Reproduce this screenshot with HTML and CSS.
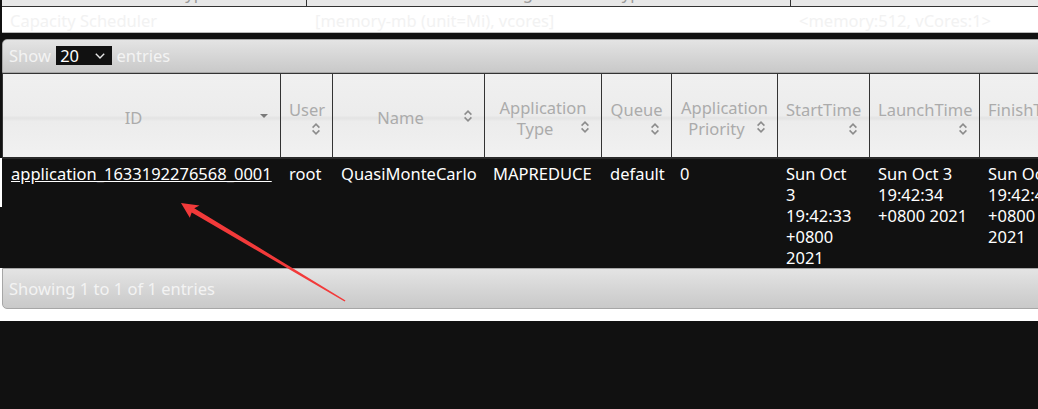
FILE: index.html
```html
<!DOCTYPE html>
<html lang="en">
<head>
<meta charset="utf-8">
<title>Applications</title>
<link rel="stylesheet" href="styles.css">
</head>
<body>
<div class="page">
  <table class="sched">
    <colgroup>
      <col class="s1"><col class="s2"><col class="s3"><col class="s4">
    </colgroup>
    <thead>
      <tr><th>Scheduler Type</th><th>Scheduling Resource Type</th><th>Minimum Allocation</th><th>Maximum Allocation</th></tr>
    </thead>
    <tbody>
      <tr><td>Capacity Scheduler</td><td>[memory-mb (unit=Mi), vcores]</td><td>&lt;memory:512, vCores:1&gt;</td><td>&lt;memory:8192, vCores:4&gt;</td></tr>
    </tbody>
  </table>

  <div class="apps">
    <div class="toolbar toolbar-top">Show <span class="select"><span class="select-val">20</span><svg class="chev" width="10" height="6" viewBox="0 0 10 6"><path d="M0.8 0.8 L5 5 L9.2 0.8" fill="none" stroke="#e6e6e6" stroke-width="1.4"/></svg></span> entries</div>

    <table class="grid">
      <colgroup>
        <col class="g-id"><col class="g-user"><col class="g-name"><col class="g-type"><col class="g-queue"><col class="g-prio"><col class="g-start"><col class="g-launch"><col class="g-finish"><col class="g-state"><col class="g-final">
      </colgroup>
      <thead>
        <tr>
          <th>ID<span class="sort"><svg width="16" height="16" viewBox="0 0 16 16"><path d="M4 6 L12 6 L8 10 Z" fill="#7a7a7a"/></svg></span></th>
          <th>User<span class="sort"><svg width="16" height="16" viewBox="0 0 16 16"><path d="M4.6 6.6 L8 3.2 L11.4 6.6 M4.6 9.4 L8 12.8 L11.4 9.4" fill="none" stroke="#8c8c8c" stroke-width="1.6"/></svg></span></th>
          <th>Name<span class="sort"><svg width="16" height="16" viewBox="0 0 16 16"><path d="M4.6 6.6 L8 3.2 L11.4 6.6 M4.6 9.4 L8 12.8 L11.4 9.4" fill="none" stroke="#8c8c8c" stroke-width="1.6"/></svg></span></th>
          <th>Application Type<span class="sort"><svg width="16" height="16" viewBox="0 0 16 16"><path d="M4.6 6.6 L8 3.2 L11.4 6.6 M4.6 9.4 L8 12.8 L11.4 9.4" fill="none" stroke="#8c8c8c" stroke-width="1.6"/></svg></span></th>
          <th>Queue<span class="sort"><svg width="16" height="16" viewBox="0 0 16 16"><path d="M4.6 6.6 L8 3.2 L11.4 6.6 M4.6 9.4 L8 12.8 L11.4 9.4" fill="none" stroke="#8c8c8c" stroke-width="1.6"/></svg></span></th>
          <th>Application Priority<span class="sort"><svg width="16" height="16" viewBox="0 0 16 16"><path d="M4.6 6.6 L8 3.2 L11.4 6.6 M4.6 9.4 L8 12.8 L11.4 9.4" fill="none" stroke="#8c8c8c" stroke-width="1.6"/></svg></span></th>
          <th>StartTime<span class="sort"><svg width="16" height="16" viewBox="0 0 16 16"><path d="M4.6 6.6 L8 3.2 L11.4 6.6 M4.6 9.4 L8 12.8 L11.4 9.4" fill="none" stroke="#8c8c8c" stroke-width="1.6"/></svg></span></th>
          <th>LaunchTime<span class="sort"><svg width="16" height="16" viewBox="0 0 16 16"><path d="M4.6 6.6 L8 3.2 L11.4 6.6 M4.6 9.4 L8 12.8 L11.4 9.4" fill="none" stroke="#8c8c8c" stroke-width="1.6"/></svg></span></th>
          <th>FinishTime<span class="sort"><svg width="16" height="16" viewBox="0 0 16 16"><path d="M4.6 6.6 L8 3.2 L11.4 6.6 M4.6 9.4 L8 12.8 L11.4 9.4" fill="none" stroke="#8c8c8c" stroke-width="1.6"/></svg></span></th>
          <th>State<span class="sort"><svg width="16" height="16" viewBox="0 0 16 16"><path d="M4.6 6.6 L8 3.2 L11.4 6.6 M4.6 9.4 L8 12.8 L11.4 9.4" fill="none" stroke="#8c8c8c" stroke-width="1.6"/></svg></span></th>
          <th>FinalStatus<span class="sort"><svg width="16" height="16" viewBox="0 0 16 16"><path d="M4.6 6.6 L8 3.2 L11.4 6.6 M4.6 9.4 L8 12.8 L11.4 9.4" fill="none" stroke="#8c8c8c" stroke-width="1.6"/></svg></span></th>
        </tr>
      </thead>
      <tbody>
        <tr>
          <td><a href="#" class="app-link">application_1633192276568_0001</a></td>
          <td>root</td>
          <td>QuasiMonteCarlo</td>
          <td>MAPREDUCE</td>
          <td>default</td>
          <td>0</td>
          <td class="tight">Sun Oct 3 19:42:33 +0800 2021</td>
          <td>Sun Oct 3 19:42:34 +0800 2021</td>
          <td>Sun Oct 3 19:42:45 +0800 2021</td>
          <td>FINISHED</td>
          <td>SUCCEEDED</td>
        </tr>
      </tbody>
    </table>

    <div class="foot-wrap">
      <div class="toolbar toolbar-bottom">Showing 1 to 1 of 1 entries</div>
    </div>
  </div>
</div>

<svg class="arrow" width="1038" height="409" viewBox="0 0 1038 409">
  <polygon points="181,203 199.5,205.6 194.3,208.2 345.5,300.4 344.6,301.6 191.7,212.4 189.8,217.8" fill="#f23a3a"/>
</svg>
</body>
</html>
```

FILE: styles.css
```css
html, body {
  margin: 0;
  padding: 0;
  overflow: hidden;
}

body {
  width: 1038px;
  height: 409px;
  background: linear-gradient(#ffffff, #ffffff) 0 158px / 2px 49px no-repeat, #111111;
  font-family: "Noto Sans", "Open Sans", sans-serif;
  font-size: 16.5px;
  line-height: 21px;
  position: relative;
}

.page {
  width: 1500px;
}

/* ---------- scheduler table (cut off at top) ---------- */
.sched {
  margin: -21px 0 0 2px;
  border-collapse: separate;
  border-spacing: 0;
  table-layout: fixed;
  width: 1476px;
}
.sched .s1 { width: 305px; }
.sched .s2 { width: 484px; }
.sched .s3 { width: 387px; }
.sched .s4 { width: 300px; }

.sched th {
  background: #e8e8e8;
  color: #9a9a9a;
  font-weight: normal;
  padding: 3px 8px;
  border-right: 1px solid #333;
  border-bottom: 1px solid #333;
  text-align: center;
}
.sched td {
  background: #ffffff;
  color: #f2f2f2;
  padding: 3px 8px 1px;
  border-bottom: 1px solid #b9b9b9;
  text-align: left;
}

/* ---------- toolbars ---------- */
.apps {
  margin-top: 6px;
}

.toolbar {
  margin-left: 2px;
  color: #f3f3f3;
  border: 1px solid #a6a6a6;
  background: linear-gradient(to bottom, #e4e4e4 0%, #d6d6d6 50%, #c9c9c9 100%);
  white-space: nowrap;
}

.toolbar-top {
  border-radius: 5px 5px 0 0;
  padding: 5px 5px 6px 6px;
}

.toolbar-bottom {
  margin-left: 0;
  border-radius: 0 0 0 5px;
  padding: 9px 6px 9px;
}

.foot-wrap {
  background: #ffffff;
  padding: 0 0 12px 2px;
}

.select {
  display: inline-flex;
  align-items: center;
  justify-content: space-between;
  box-sizing: border-box;
  width: 56px;
  height: 19px;
  margin-left: 1px;
  padding: 0 7px 0 4px;
  background: #111111;
  color: #ffffff;
  line-height: 19px;
  vertical-align: baseline;
}
.select-val {
  line-height: 19px;
}
.chev {
  display: block;
  margin-top: 1px;
}

/* ---------- applications grid ---------- */
.grid {
  margin-left: 2px;
  border-collapse: separate;
  border-spacing: 0;
  table-layout: fixed;
  width: 1330px;
}
.grid .g-id { width: 279px; }
.grid .g-user { width: 52px; }
.grid .g-name { width: 152px; }
.grid .g-type { width: 117px; }
.grid .g-queue { width: 70px; }
.grid .g-prio { width: 106px; }
.grid .g-start { width: 92px; }
.grid .g-launch { width: 110px; }
.grid .g-finish { width: 100px; }
.grid .g-state { width: 110px; }
.grid .g-final { width: 142px; }

.grid th {
  box-sizing: border-box;
  height: 86px;
  padding: 4px 8px 0;
  font-weight: normal;
  color: #ababab;
  text-align: center;
  vertical-align: middle;
  background: linear-gradient(to bottom, #f0f0f0 0%, #ececec 50%, #e3e3e3 53%, #ececec 57%, #f1f1f1 100%);
  border-top: 1px solid #333;
  border-bottom: 2px solid #2a2a2a;
  border-right: 1px solid #333;
}
.grid th:first-child {
  border-left: 1px solid #333;
}

.sort {
  float: right;
  width: 16px;
  height: 16px;
  margin-top: 1px;
}
.sort svg {
  display: block;
}

.grid td {
  padding: 4px 8px 0;
  color: #ffffff;
  background: #111111;
  vertical-align: top;
  text-align: left;
  border-right: 1px solid #111111;
  overflow: visible;
}
.grid td:first-child {
  border-left: 1px solid #111111;
}
.grid td.tight {
  padding-right: 10px;
}

.app-link {
  color: #ffffff;
  text-decoration: underline;
}

/* ---------- annotation ---------- */
.arrow {
  position: absolute;
  left: 0;
  top: 0;
  pointer-events: none;
}
```
